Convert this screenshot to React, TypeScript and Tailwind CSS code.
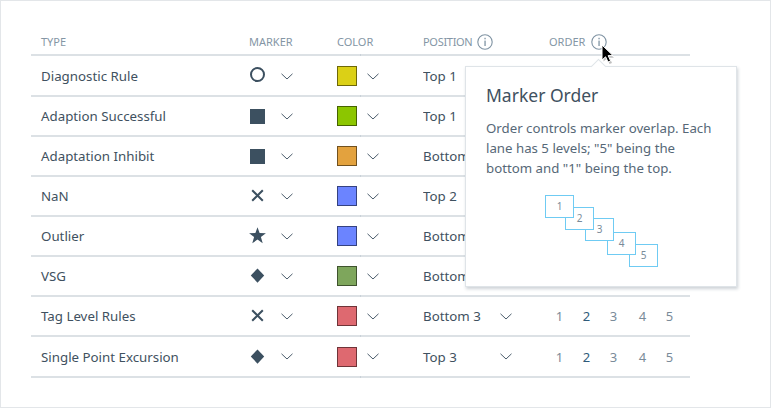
const rows = [
  { name: "Diagnostic Rule", marker: "circle", fill: "bg-[#dbd016]", edge: "border-[#6e6808]", pos: "Top 1" },
  { name: "Adaption Successful", marker: "square", fill: "bg-[#8cc600]", edge: "border-[#466300]", pos: "Top 1" },
  { name: "Adaptation Inhibit", marker: "square", fill: "bg-[#e3a23e]", edge: "border-[#71511f]", pos: "Bottom 1" },
  { name: "NaN", marker: "x", fill: "bg-[#6b84ff]", edge: "border-[#354280]", pos: "Top 2" },
  { name: "Outlier", marker: "star", fill: "bg-[#6b84ff]", edge: "border-[#354280]", pos: "Bottom 2" },
  { name: "VSG", marker: "diamond", fill: "bg-[#7ea65c]", edge: "border-[#3f532e]", pos: "Bottom 2" },
  { name: "Tag Level Rules", marker: "x", fill: "bg-[#de6970]", edge: "border-[#6f3438]", pos: "Bottom 3", open: true },
  { name: "Single Point Excursion", marker: "diamond", fill: "bg-[#de6970]", edge: "border-[#6f3438]", pos: "Top 3", open: true },
]

const boxes = [
  { n: 1, cls: "left-[79px] top-[128px] z-50" },
  { n: 2, cls: "left-[99px] top-[140px] z-40" },
  { n: 3, cls: "left-[119px] top-[151px] z-30" },
  { n: 4, cls: "left-[141px] top-[165px] z-20" },
  { n: 5, cls: "left-[163px] top-[177px] z-10" },
]

function Chevron() {
  return (
    <svg width="12" height="7" viewBox="0 0 12 7" fill="none" stroke="#4a5c6b" strokeWidth="1">
      <path d="M0.5 0.8 L6 6 L11.5 0.8" />
    </svg>
  )
}

function Info() {
  return (
    <svg width="16" height="16" viewBox="0 0 16 16" fill="none">
      <circle cx="8" cy="8" r="7.2" stroke="#7f93a3" strokeWidth="1.1" />
      <rect x="7.4" y="3.8" width="1.3" height="1.5" fill="#7f93a3" />
      <rect x="7.4" y="6.6" width="1.3" height="5.4" fill="#7f93a3" />
    </svg>
  )
}

function Marker({ type }: { type: string }) {
  return (
    <svg width="18" height="18" viewBox="0 0 18 18" fill="#3c5060">
      {type === "circle" && <circle cx="8.5" cy="7.5" r="6.5" fill="none" stroke="#3c5060" strokeWidth="2" />}
      {type === "square" && <rect x="1" y="2" width="15" height="15" />}
      {type === "x" && <path d="M3.2 3.2 L13.8 13.8 M13.8 3.2 L3.2 13.8" fill="none" stroke="#3c5060" strokeWidth="2" />}
      {type === "star" && <path d="M8.5 0.3 L10.6 6 L16.9 6.2 L11.9 10 L13.7 16.3 L8.5 12.6 L3.3 16.3 L5.1 10 L0.1 6.2 L6.4 6 Z" />}
      {type === "diamond" && <path d="M8.5 1.4 L15.2 8.5 L8.5 15.7 L1.8 8.5 Z" />}
    </svg>
  )
}

function Cursor() {
  return (
    <svg className="absolute left-[599px] top-[43px] z-50" width="16" height="22" viewBox="0 0 16 22">
      <path d="M2.5 2.5 V16 L6 13 L8.5 18.5 L11 17.5 L8.6 12.2 H13 Z" fill="#000" opacity="0.25" transform="translate(1 1.5)" />
      <path d="M2 1 V16 L5.6 12.8 L8 18 L10.6 17 L8.2 11.6 H13 Z" fill="#000" stroke="#fff" strokeWidth="1" />
    </svg>
  )
}

export default function App() {
  return (
    <div className="relative h-[408px] w-[771px] overflow-hidden border border-[#e3e6e9] bg-white pl-[30px] pt-[27px] font-['Noto_Sans',sans-serif] text-[#3f5160]">
      {/* Header */}
      <div className="relative mb-px grid h-[28px] w-[659px] grid-cols-[218px_88px_86px_126px_141px] items-center border-b-2 border-[#dce1e5] pt-[2px] text-[11px] text-[#8496a5]">
        <div className="pl-[10px]">TYPE</div>
        <div>MARKER</div>
        <div>COLOR</div>
        <div className="flex items-center gap-[5px] tracking-[-0.3px]">POSITION <Info /></div>
        <div className="flex items-center gap-[6px]">ORDER <Info /></div>
        <span className="absolute bottom-[-2px] left-[329px] h-[2px] w-px bg-[#c9d1d8]" />
      </div>

      {/* Rows */}
      {rows.map((r, i) => (
        <div
          key={r.name}
          className={`relative grid w-[659px] grid-cols-[218px_88px_86px_126px_141px] items-center border-b-2 border-[#dce1e5] text-[13.3px] ${i === 7 ? "h-[41px]" : "h-[40px]"}`}
        >
          <div className="pl-[10px] pt-[2px]">{r.name}</div>
          <div className="flex items-center">
            <span className="w-[32px]"><Marker type={r.marker} /></span>
            <Chevron />
          </div>
          <div className="flex items-center gap-[10px]">
            <div className={`h-[20px] w-[20px] border ${r.fill} ${r.edge}`} />
            <Chevron />
          </div>
          {r.open ? (
            <div className="flex items-center">
              <span className="w-[77px] pt-[2px]">{r.pos}</span>
              <Chevron />
            </div>
          ) : (
            <div className="w-[42px] overflow-hidden whitespace-nowrap pt-[2px]">{r.pos}</div>
          )}
          {r.open && (
            <div className="flex pl-[3px] pt-[2px] text-[13px] text-[#7a8b99]">
              <span className="w-[15px] text-center">1</span>
              <span className="ml-[12px] w-[15px] text-center text-[#2f5b7a]">2</span>
              <span className="ml-[12px] w-[15px] text-center">3</span>
              <span className="ml-[14px] w-[15px] text-center">4</span>
              <span className="ml-[12px] w-[15px] text-center">5</span>
            </div>
          )}
          <span className="absolute bottom-[-2px] left-[329px] h-[2px] w-px bg-[#c9d1d8]" />
        </div>
      ))}

      {/* Tooltip */}
      <div className="absolute left-[464px] top-[65px] z-40 h-[221px] w-[272px] border border-[#dfe4e8] bg-white px-[20px] pt-[15px] shadow-[1px_2px_3px_rgba(60,80,96,0.25)]">
        <div className="absolute left-[127px] top-[-6px] h-[11px] w-[11px] rotate-45 border-l border-t border-[#dfe4e8] bg-white" />
        <div className="text-[17.5px] leading-[26px] text-[#3f5160]">Marker Order</div>
        <p className="mt-[10px] text-[13.25px] leading-[20px] text-[#566877]">
          Order controls marker overlap. Each lane has 5 levels; "5" being the bottom and "1" being the top.
        </p>
        {boxes.map(b => (
          <div key={b.n} className={`absolute flex h-[23px] w-[29px] items-center justify-center border border-[#6fcbf3] bg-white text-[10px] text-[#7a8b99] ${b.cls}`}>
            {b.n}
          </div>
        ))}
      </div>

      <Cursor />
    </div>
  )
}
